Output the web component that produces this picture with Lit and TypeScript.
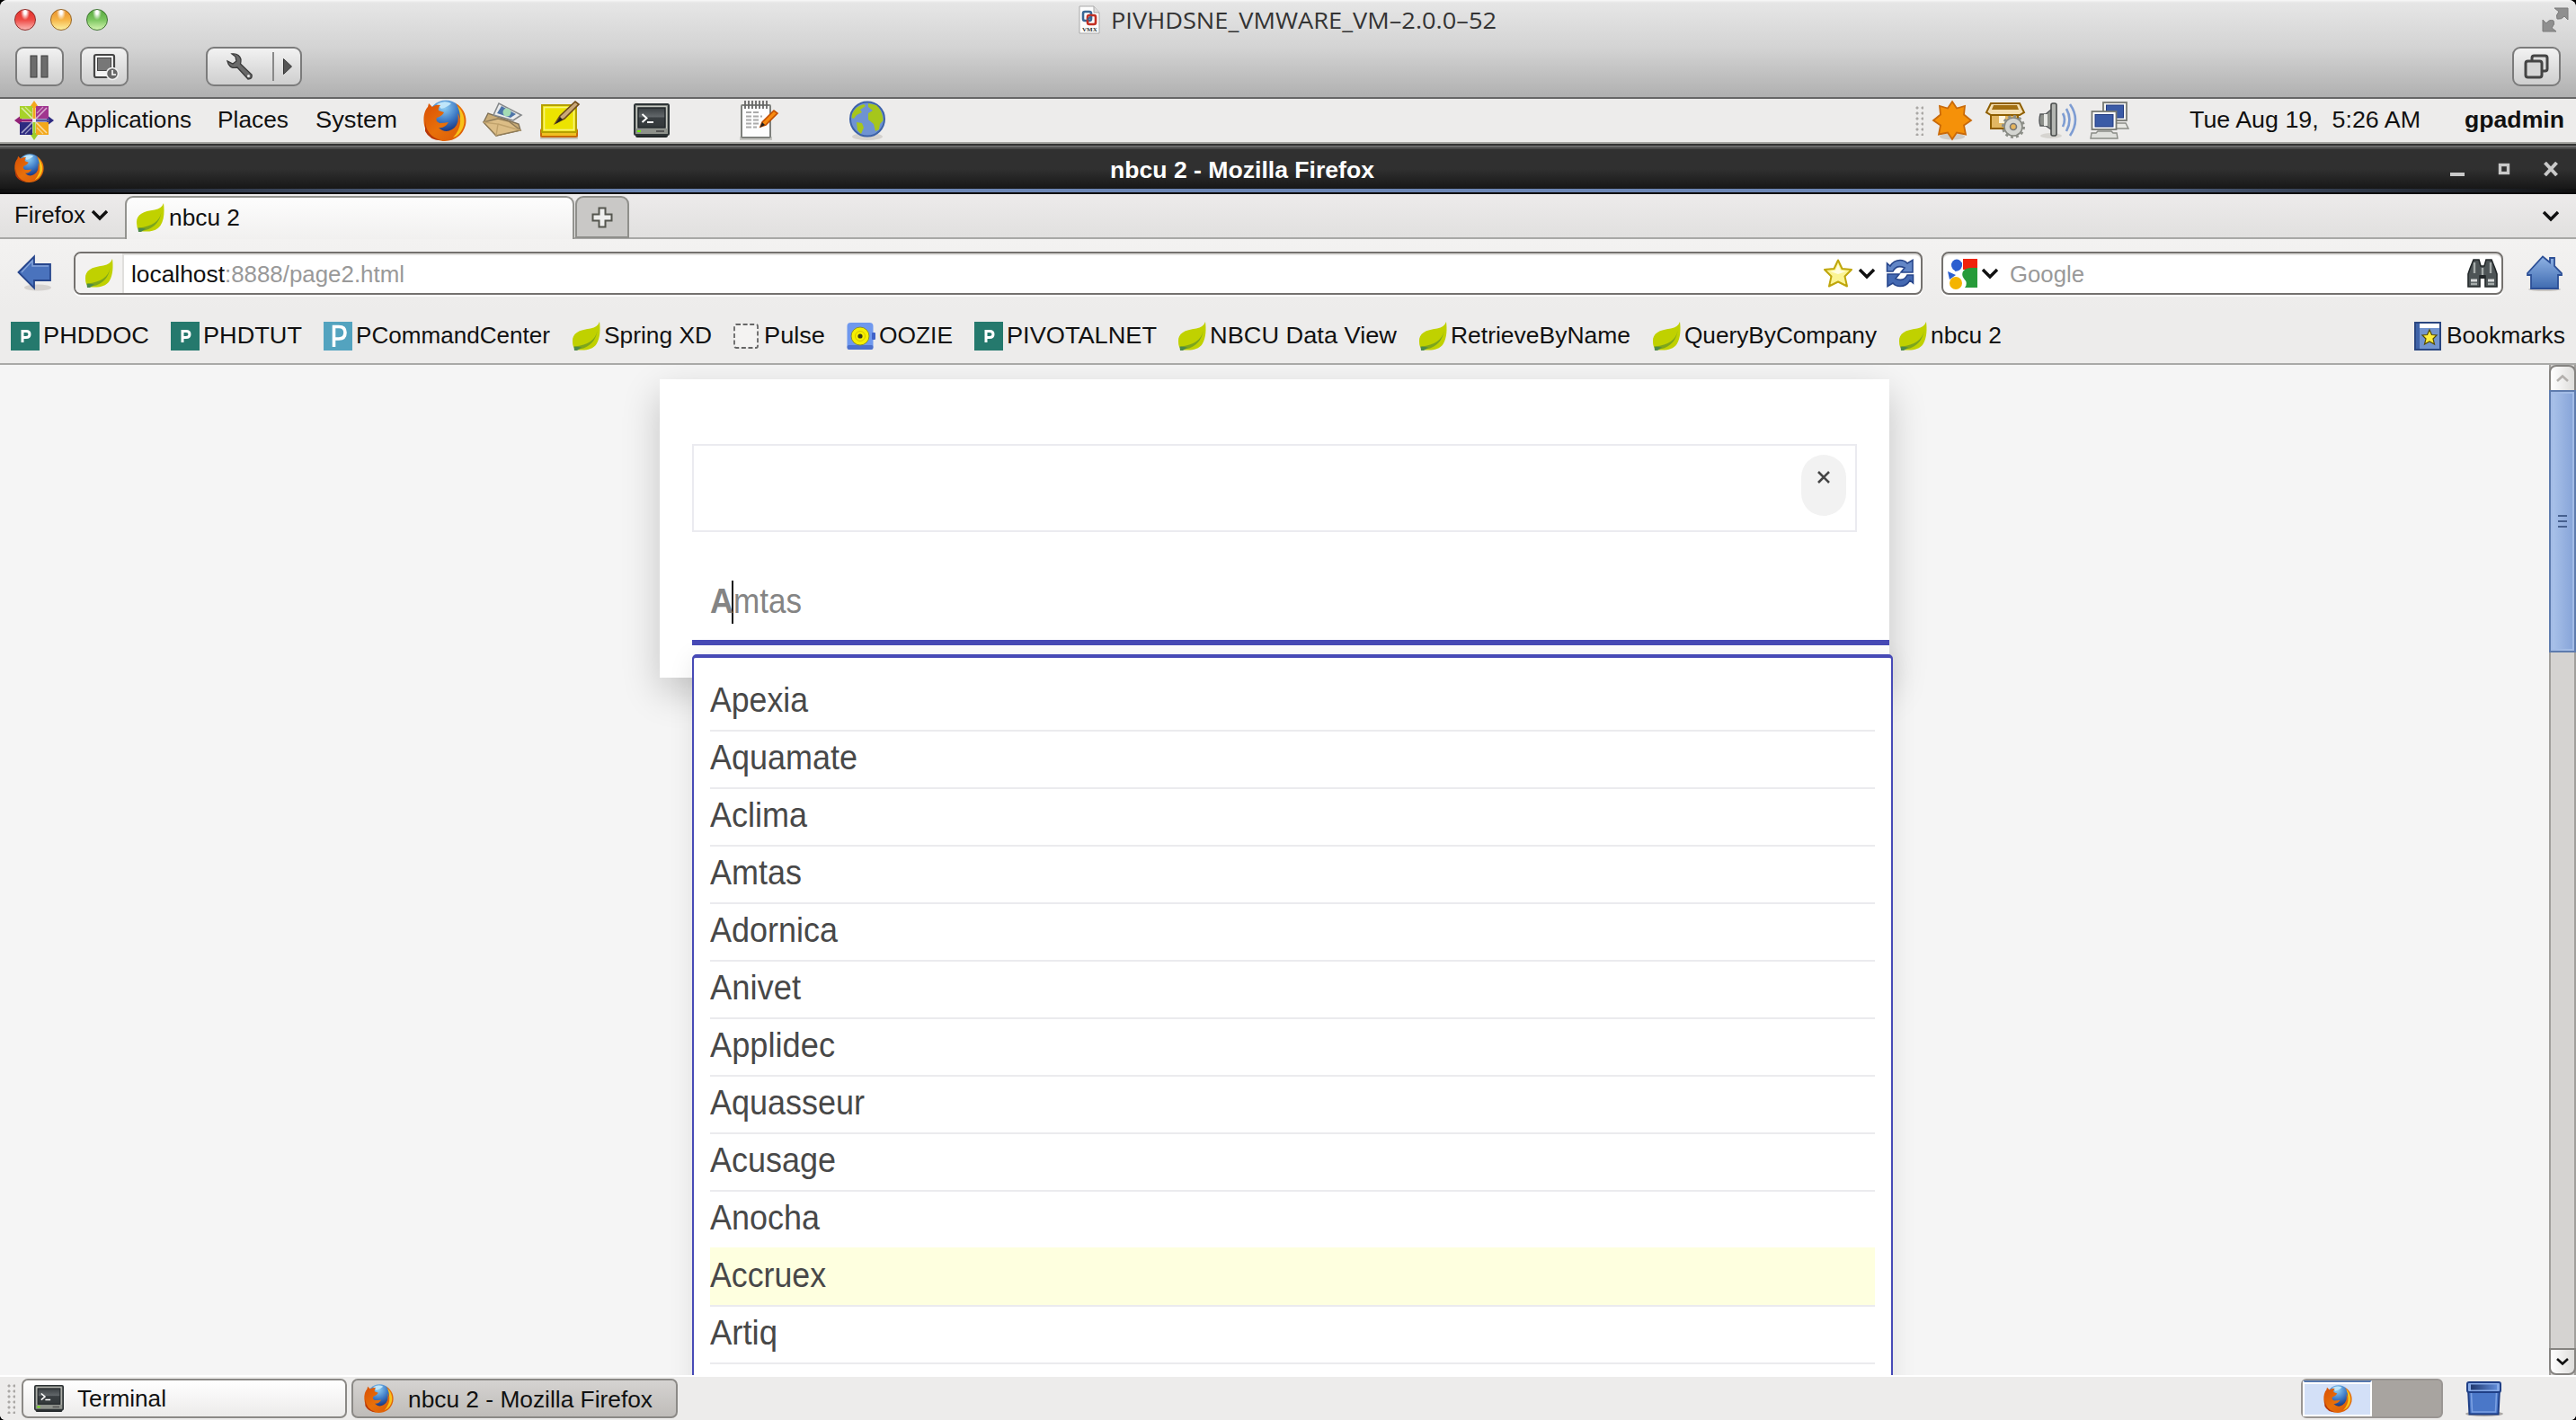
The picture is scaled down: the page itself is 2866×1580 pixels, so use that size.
import { LitElement, html, svg, css } from "lit";

/* A label whose glyphs are condensed or widened so the text spans exactly `w` pixels. */
class FitLabel extends LitElement {
  static properties = { text: {}, w: { type: Number } };
  declare text: string;
  declare w: number;
  static styles = css`
    :host { display: inline-block; white-space: pre; line-height: 30px; }
    .box { display: block; width: var(--w); }
    .run { display: inline-block; transform-origin: 0 50%; }
  `;
  render() {
    return html`<span class="box" style="--w:${this.w}px"><span class="run">${this.text}</span></span>`;
  }
  updated() {
    const s = this.renderRoot.querySelector(".run") as HTMLElement;
    s.style.transform = "none";
    const natural = s.getBoundingClientRect().width;
    if (natural > 0) s.style.transform = `scaleX(${(this.w / natural).toFixed(4)})`;
  }
}
customElements.define("fit-label", FitLabel);

const label = (text: string, w: number, cls = "") =>
  html`<fit-label class=${cls} .text=${text} .w=${w}></fit-label>`;

const icon = (w: number, h: number, vb: string, body: unknown) =>
  html`<svg class="ic" width=${w} height=${h} viewBox=${vb} preserveAspectRatio="none">${body}</svg>`;

const firefox = (w: number, h: number) => icon(w, h, "0 0 48 46", svg`
  <circle cx="25" cy="20" r="19.5" fill="url(#globe)"/>
  <path d="M15 5 Q23 0 31 4 Q27 8 20 10 Z" fill="#bfe6fa"/>
  <path d="M36 4 C45 9 49 19 47 28 C44 40 34 46 24 46 C11 46 1 37 0.5 24 C0 17 2 11 5 8 L6 4 L10 8 Q14 5 19 6 Q16 9 17 12 L23 14 Q21 18 15 20 Q13 24 18 26 Q23 26 28 25 Q24 32 17 31 Q24 38 32 33 Q41 27 38 15 Q42 20 41 27 Q44 15 36 4Z" fill="url(#fox)"/>
  <path d="M38 7 C46 15 48 26 42 35 Q39 40 33 42 Q42 32 41 22 Q41 13 38 7Z" fill="#f9c21a"/>
  <path d="M2 24 Q3 40 19 45 Q7 45 2 35Z" fill="#b83708"/>`);

const leaf = icon(32, 32, "0 0 32 32", svg`
  <path d="M31 0 Q29 6 21 7.500 C8 9 0.500 13 1 22 Q1 28 4 31 C14 32.500 23 31.500 27.500 25 C32 18 32 8 31 0Z" fill="#c0d100"/>
  <path d="M28.500 10 C27 20 18 26 3.500 27.500 L3 31 C18 31 27 22 28.500 10Z" fill="#7da51c"/>
  <path d="M2.500 27.500 L11 28.500 L6 32 L3 32Z" fill="#4d8a4a"/>`);

const pLogo = (bg: string, big: boolean) => icon(32, 32, "0 0 32 32", big ? svg`
  <rect width="32" height="32" fill=${bg}/><path d="M11.500 28 V5.500 H17 Q24 5.500 24 12 Q24 19 17 19 H11.500" fill="none" stroke="#fff" stroke-width="3.600"/>` : svg`
  <rect width="32" height="32" fill=${bg}/><path d="M13 23 V10.500 H17 Q21 10.500 21 14 Q21 17.500 17 17.500 H13" fill="none" stroke="#fff" stroke-width="3"/>`);

const pulse = icon(32, 32, "0 0 32 32", svg`
  <rect x="3" y="3" width="26" height="26" rx="2" fill="#f4f3f2" stroke="#666" stroke-width="1.800" stroke-dasharray="5 2.600"/>`);

const oozie = icon(32, 32, "0 0 32 32", svg`
  <rect x="0.500" y="1" width="29" height="30" rx="4" fill="#6f98ee"/><rect x="28" y="12" width="4" height="8" rx="1" fill="#3f62c8"/>
  <rect x="0.500" y="26" width="29" height="5" rx="2" fill="#4c70cc"/>
  <circle cx="15" cy="16" r="10" fill="#f6f000" stroke="#8a8f30"/><circle cx="15" cy="16" r="2.600" fill="#3a3a18"/><circle cx="15" cy="16" r="5.500" fill="none" stroke="#d8c400"/>`);

const chev = (w = 20, h = 12) => icon(w, h, "0 0 20 12", svg`
  <path d="M2 2 L10 10 L18 2" fill="none" stroke="#111" stroke-width="3.400"/>`);

const terminal = (w: number, h: number) => icon(w, h, "0 0 40 38", svg`
  <rect x="2" y="30" width="36" height="8" rx="2" fill="#232729"/>
  <rect x="1" y="1" width="38" height="34" rx="1.500" fill="#8e918b" stroke="#2e3436" stroke-width="2"/>
  <path d="M3 3 H37 V28 H3Z" fill="#c6c8c2"/>
  <rect x="5" y="5" width="30" height="22" fill="url(#screen)" stroke="#22272a" stroke-width="1.500"/>
  <path d="M9.500 12 L14.500 16.500 L9.500 21" fill="none" stroke="#fff" stroke-width="2"/><path d="M15 21 H22" stroke="#fff" stroke-width="2"/>
  <rect x="4" y="30" width="4" height="2" fill="#73f000"/><rect x="25" y="30" width="9" height="2" fill="#555"/>`);

const centos = icon(44, 44, "0 0 44 44", svg`
  <path d="M22 0 L27.500 8 H16.500Z" fill="#f3a81c"/><path d="M22 44 L27.500 36 H16.500Z" fill="#9ccd2a"/>
  <path d="M0 22 L8 16 V28Z" fill="#932178"/><path d="M44 22 L36 16 V28Z" fill="#2d2a80"/>
  <rect x="6" y="6" width="14" height="14" fill="#a7d129"/><rect x="24" y="6" width="14" height="14" fill="#a0358f"/>
  <rect x="6" y="24" width="14" height="14" fill="#2d2a80"/><rect x="24" y="24" width="14" height="14" fill="#f3a81c"/>
  <path d="M8 8 L20 20 M36 8 L24 20 M8 36 L20 24 M36 36 L24 24" stroke="#fff" stroke-opacity=".6" stroke-width="1.600"/>
  <path d="M12 7 L19 14 M32 7 L25 14 M12 37 L19 30 M32 37 L25 30" stroke="#fff" stroke-opacity=".5" stroke-width="1.200"/>
  <path d="M22 5 V20" stroke="#f3a81c" stroke-width="3"/><path d="M22 24 V39" stroke="#9ccd2a" stroke-width="3"/><path d="M5 22 H20" stroke="#932178" stroke-width="3"/><path d="M24 22 H39" stroke="#5a57a0" stroke-width="3"/>`);

const mail = icon(44, 40, "0 0 44 40", svg`
  <path d="M1 22 L6 12 L40 24 L42 31 L15 37Z" fill="#c9ac77" stroke="#7e6f55" stroke-width="1.400"/>
  <path d="M12 14 L18 1 L43 14 L34 20Z" fill="#eceded" stroke="#85888a" stroke-width="1.600"/>
  <path d="M16 12 L21 4 L37 13 L31 17Z" fill="#4d74a8"/><circle cx="27" cy="11" r="4.500" fill="#a4dcb4"/>
  <path d="M1 22 L17 18 L29 21 L42 31 L15 37Z" fill="#dcbd86" stroke="#907c58" stroke-width="1.400"/>
  <path d="M1 22 L17 24 L15 37 M17 24 L42 31" fill="none" stroke="#c0a26c" stroke-width="1.400"/>`);

const note = icon(44, 44, "0 0 44 44", svg`
  <rect x="0" y="38" width="42" height="5" rx="1" fill="#c9c6bd"/>
  <rect x="1" y="32" width="40" height="8" rx="1" fill="#f0c020" stroke="#c76a0a" stroke-width="2"/>
  <rect x="2" y="5" width="38" height="30" fill="#ece300" stroke="#b5a000" stroke-width="2"/>
  <rect x="4.500" y="7.500" width="33" height="25" fill="none" stroke="#f8f37a" stroke-width="1.600"/>
  <path d="M17 25 L22 17 L39 1 L43 4 L27 20Z" fill="#c9a878" stroke="#6d4a18" stroke-width="1.600"/><path d="M17 26 L22 18 L25 21Z" fill="#222"/>`);

const notepad = icon(44, 44, "0 0 44 44", svg`
  <rect x="1" y="40" width="36" height="4" fill="#c6c6c2"/>
  <rect x="3" y="5" width="32" height="36" rx="1" fill="#fdfdfd" stroke="#7e807c" stroke-width="2"/>
  <path d="M7 0 V9 M11 0 V9 M15 0 V9 M19 0 V9 M23 0 V9 M27 0 V9 M31 0 V9" stroke="#666" stroke-width="1.800"/>
  <path d="M8 13 H22 M8 17.500 H26 M8 21.500 H24 M8 25.500 H22 M8 29.500 H20" stroke="#aaa" stroke-width="1.800" stroke-dasharray="6 2"/>
  <path d="M24 29 L26 24 L39 11 L43 14 L30 27Z" fill="#f78a10" stroke="#c24e00" stroke-width="1.600"/><path d="M23.500 30 L26 24 L29 27Z" fill="#222"/>`);

const world = icon(42, 44, "0 0 42 44", svg`
  <ellipse cx="21" cy="40" rx="17" ry="4" fill="#d5d2ce"/>
  <circle cx="21" cy="20.500" r="19" fill="#6f93d2" stroke="#3d62a8" stroke-width="2"/>
  <path d="M4 15 Q8 6 17 4 L19 6 L13 10 L15 13 L9 16 L6 20 L3.500 19Z M9 24 L15 25 L17 30 L14 37 L10 33Z M22 3 L31 5 Q38 11 38.500 22 L35 26 L34 32 L30 34 L28 26 L22 21 L22 14 L27 11 L22 7Z" fill="#a6c61b"/>`);

const sun = icon(44, 44, "0 0 44 44", svg`
  <ellipse cx="22" cy="40" rx="14" ry="3.500" fill="#cfccc8"/>
  <path d="M22 1 L27 8.500 L36 6 L35 15.500 L43 22 L35 27.500 L37 37.500 L27 35.500 L22 43 L17 35.500 L7 37.500 L9 27.500 L1 22 L9 15.500 L8 6 L17 8.500Z" fill="#f59109" stroke="#c96a0a" stroke-width="1.800"/>`);

const box = icon(44, 42, "0 0 44 42", svg`
  <rect x="6" y="14" width="30" height="16" fill="#e2b763" stroke="#8f5f00" stroke-width="2"/>
  <path d="M6 2 H38 L43 12 L38 15 H6 L1 12Z" fill="#f3dfb4" stroke="#8f5f00" stroke-width="2"/><path d="M9 4 H35 L37 9 H7Z" fill="#a26f12"/>
  <rect x="15" y="16" width="7" height="8" fill="#fff5dc"/>
  <circle cx="31" cy="28" r="10" fill="#d4d5d1" stroke="#84867f" stroke-width="1.600"/>
  <circle cx="31" cy="28" r="11.500" fill="none" stroke="#8d8f89" stroke-width="3" stroke-dasharray="3 3"/><circle cx="31" cy="28" r="3.500" fill="#e5b45c" stroke="#777" stroke-width="1.600"/>`);

const speaker = icon(44, 42, "0 0 44 42", svg`
  <ellipse cx="14" cy="38" rx="12" ry="3" fill="#d6d4d0"/>
  <path d="M2 14 H8 L14 9 V31 L8 27 H2 Q0 21 2 14Z" fill="#8d908b" stroke="#55585a" stroke-width="1.400"/><path d="M6 14 H10 V27 H6Z" fill="#e8e9e6"/>
  <rect x="14" y="2" width="6" height="36" rx="2" fill="#b4b6b2" stroke="#4a4d4c" stroke-width="1.600"/>
  <path d="M27 13 Q31 20 27 28 M31 8 Q38 20 31 33 M35 3 Q47 20 35 38" fill="none" stroke="#7d9cd2" stroke-width="2.600"/>`);

const network = icon(44, 42, "0 0 44 42", svg`
  <path d="M20 24 H40 L43 30 H20Z" fill="#e8e8e4" stroke="#8a8c86" stroke-width="1.400"/>
  <rect x="15" y="1" width="26" height="20" fill="#f4f4f2" stroke="#777973" stroke-width="1.800"/><rect x="18.500" y="4" width="19" height="14" fill="#3b5ba6" stroke="#213a80"/>
  <rect x="2.500" y="11" width="27" height="20" fill="#fff" stroke="#777973" stroke-width="1.800"/><rect x="6" y="14.500" width="20" height="13.500" fill="#3b5ba6" stroke="#213a80"/>
  <path d="M9 33 H24 L26 35 H30 L31 41 H1 L2 35 H7Z" fill="#dfe0dc" stroke="#8a8c86" stroke-width="1.400"/>`);

const back = icon(38, 40, "0 0 38 40", svg`
  <ellipse cx="23" cy="36" rx="15" ry="3.500" fill="#d5d2cf"/>
  <path d="M1.500 19 L19 1.500 V10 H37 V28 H19 V36.500Z" fill="#4a73bd" stroke="#27468c" stroke-width="1.800"/><path d="M5 19 L17 6 V12 H35" fill="none" stroke="#86a5da" stroke-width="1.400"/>`);

const star = icon(32, 32, "0 0 32 32", svg`
  <path d="M16 1.500 L20.500 11 L31 12 L23.500 19.500 L26 30.500 L16 25.500 L6 30.500 L8.500 19.500 L1 12 L11.500 11Z" fill="#fbf494" stroke="#bfa60b" stroke-width="2" stroke-linejoin="round"/><path d="M16 6 L19 13 L25 14 L16 17 L7 14 L13 13Z" fill="#fffde0"/>`);

const reload = icon(32, 32, "0 0 32 32", svg`
  <path d="M1.500 14 V5 L5 8 Q9 1.500 16 1.500 Q21 1.500 24 5 L30 1.500 V15 H17 L21 10 Q12 6 8 14Z" fill="#6286c6" stroke="#27468c" stroke-width="1.600"/>
  <path d="M30.500 18 V27 L27 24 Q23 30.500 16 30.500 Q11 30.500 8 27 L2 30.500 V17 H15 L11 22 Q20 26 24 18Z" fill="#4469b2" stroke="#27468c" stroke-width="1.600"/>`);

const google = icon(34, 32, "0 0 34 32", svg`
  <rect x="18" y="0" width="16" height="12" fill="#f0230c"/><path d="M18 14 Q21 10 27 10 H34 V32 H20 Q24 27 19 22 Q16 18 18 14Z" fill="#279b3a"/>
  <ellipse cx="11" cy="7" rx="6" ry="6.500" fill="#2c5fd0"/><path d="M1 14 L10 18 L3 23Z" fill="#2c5fd0"/><circle cx="10" cy="27" r="7" fill="#f4b400"/><path d="M9 13 Q16 12 16 4" fill="none" stroke="#2c5fd0" stroke-width="2"/>`);

const binoculars = icon(34, 32, "0 0 34 32", svg`
  <path d="M7 1 H13 L15 8 H19 L21 1 H27 L31 11 L33 17 V31 H20 V19 H14 V31 H1 V17 L3 11Z" fill="#4d5456" stroke="#23282a" stroke-width="1.600"/>
  <path d="M14 20 H20" stroke="#23282a" stroke-width="4"/>
  <path d="M4 24 H11 M23 24 H30" stroke="#d8dada" stroke-width="3"/><path d="M8 4 V16 M26 4 V16 M4 28 H11 M23 28 H30 M17 10 V18" stroke="#a5abaa" stroke-width="2.400"/>`);

const home = icon(40, 40, "0 0 40 40", svg`
  <ellipse cx="20" cy="38" rx="18" ry="2" fill="#c9c6c3"/>
  <path d="M26 3 H31 V12 L39 20 V22 H35 V37 H5 V22 H1 V20 L18 1.500 L26 8Z" fill="url(#homeBlue)" stroke="#2c4f96" stroke-width="1.800"/>`);

const bookmark = icon(30, 32, "0 0 30 32", svg`
  <rect x="1" y="1" width="28" height="30" fill="#7294ce" stroke="#2a4680" stroke-width="2"/><rect x="5" y="2" width="23" height="5" fill="#fff"/><rect x="2" y="2" width="4" height="28" fill="#3f63a8"/>
  <path d="M17 9 L19.500 14.500 L25 15 L21 19 L22.500 25 L17 22 L11.500 25 L13 19 L9 15 L14.500 14.500Z" fill="#ffee3c" stroke="#544a00" stroke-width="1.200"/>`);

const trash = icon(44, 40, "0 0 44 40", svg`
  <ellipse cx="22" cy="37" rx="21" ry="3" fill="#aaa7a4"/>
  <path d="M4 9 H39 L37.500 37.500 H5.500Z" fill="#4a77c8" stroke="#1f3f86" stroke-width="2"/><path d="M7.500 14 L8.500 35 H34.500 L35.500 14" fill="none" stroke="#7ba0e2" stroke-width="1.600"/>
  <rect x="3" y="2" width="37" height="11" rx="2" fill="#86a9e6" stroke="#1f3f86" stroke-width="2"/><rect x="7" y="4.500" width="29" height="6" fill="url(#bin)"/>`);

const vmx = icon(24, 32, "0 0 24 32", svg`
  <path d="M1 1 H17 L23 8 V31 H1Z" fill="#fdfdfd" stroke="#a9a9a9"/><path d="M17 1 V8 H23" fill="#ddd" stroke="#a9a9a9"/>
  <rect x="5" y="7" width="9" height="10" rx="2" fill="none" stroke="#3a6794" stroke-width="2.600"/><rect x="10" y="11" width="9" height="10" rx="2" fill="none" stroke="#c32f23" stroke-width="2.600"/><path d="M10 16 L14 12" stroke="#3a6794" stroke-width="2"/>
  <text x="4" y="29" class="vmx">VMX</text>`);

const pause = icon(22, 26, "0 0 22 26", svg`
  <rect x="1" y="1" width="7" height="24" fill="#6c6c6c" stroke="#3c3c3c"/><rect x="13" y="1" width="7" height="24" fill="#6c6c6c" stroke="#3c3c3c"/>`);

const snapshot = icon(30, 32, "0 0 30 32", svg`
  <rect x="3" y="3" width="22" height="25" rx="2" fill="#f2f2f2" stroke="#444" stroke-width="2.200"/><rect x="6.500" y="6.500" width="15" height="14" fill="#777" stroke="#444"/>
  <circle cx="23" cy="24" r="6.500" fill="#666" stroke="#f0f0f0" stroke-width="1.500"/><path d="M23 20 V25 H27" fill="none" stroke="#fff" stroke-width="1.600"/>`);

const wrench = icon(30, 30, "0 0 30 30", svg`
  <path d="M6 1 Q14 0 16 7 Q16 11 15.500 12 L28 24 Q29 29 24 29 L12 16 Q3 18 1 9 L7 12 L11 9 L10 4Z" fill="#6a6a6a" stroke="#3a3a3a" stroke-width="1.300"/><circle cx="24.500" cy="25.500" r="1.500" fill="#eee"/>`);

const play = icon(10, 18, "0 0 10 18", svg`<path d="M0.500 0.500 L9.500 9 L0.500 17.500Z" fill="#555" stroke="#333"/>`);

const windows = icon(30, 30, "0 0 30 30", svg`
  <rect x="10" y="3" width="17" height="17" rx="2.500" fill="#ddd" stroke="#444" stroke-width="3"/><rect x="3" y="9" width="18" height="18" rx="2.500" fill="#d6d6d6" stroke="#444" stroke-width="3"/>`);

const expand = icon(30, 28, "0 0 30 28", svg`
  <path d="M14 1 H29 V14 L25 10 Q22 14 17 13 Q15 9 19 5Z M1 14 L5 18 Q8 13 13 15 Q15 19 11 23 L16 27 H1Z" fill="#8f8f8f" stroke="#7b7b7b"/>`);

const plus = icon(24, 24, "0 0 24 24", svg`
  <path d="M8.500 1.500 H15.500 V8.500 H22.500 V15.500 H15.500 V22.500 H8.500 V15.500 H1.500 V8.500 H8.500Z" fill="#efefee" stroke="#55564f" stroke-width="2"/>`);

const wmin = icon(18, 16, "0 0 18 16", svg`<rect x="1" y="12" width="16" height="4" fill="#c9c9c9"/>`);
const wmax = icon(14, 14, "0 0 14 14", svg`<rect x="2.500" y="2.500" width="9" height="9" fill="none" stroke="#c9c9c9" stroke-width="3.400"/>`);
const wclose = icon(18, 16, "0 0 18 16", svg`<path d="M2.500 1 L15.500 15 M15.500 1 L2.500 15" stroke="#c9c9c9" stroke-width="4"/>`);

const grip = html`<i class="grip"></i>`;

const teal = "#25796d";
const BOOKMARKS: [unknown, string, number, number][] = [
  [pLogo(teal, false), "PHDDOC", 118, 178],
  [pLogo(teal, false), "PHDTUT", 110, 170],
  [pLogo("#53a3bf", true), "PCommandCenter", 216, 276],
  [leaf, "Spring XD", 120, 178],
  [pulse, "Pulse", 68, 128],
  [oozie, "OOZIE", 82, 142],
  [pLogo(teal, false), "PIVOTALNET", 167, 226],
  [leaf, "NBCU Data View", 208, 268],
  [leaf, "RetrieveByName", 200, 260],
  [leaf, "QueryByCompany", 214, 274],
  [leaf, "nbcu 2", 79, 160],
];

const MATCHES: [string, number][] = [
  ["Apexia", 109], ["Aquamate", 164], ["Aclima", 108], ["Amtas", 102],
  ["Adornica", 142], ["Anivet", 101], ["Applidec", 139], ["Aquasseur", 172],
  ["Acusage", 140], ["Anocha", 122], ["Accruex", 129], ["Artiq", 75],
];

class AppRoot extends LitElement {
  static styles = css`
    :host { display: block; width: 2866px; height: 1580px; background: #000; overflow: hidden; }
    * { box-sizing: border-box; }
    .screen { display: flex; flex-direction: column; width: 2866px; height: 1580px; border-radius: 8px 8px 6px 6px; overflow: hidden; background: #edeceb;
      font: 26px/30px "Liberation Sans", Arial, sans-serif; color: #111; }
    .ic { display: block; flex: none; overflow: visible; }
    .defs { position: absolute; }
    .vmx { font: bold 7px/7px "Liberation Serif", serif; fill: #333; }

    .host { flex: none; height: 110px; border-bottom: 2px solid #666; background: linear-gradient(#f8f8f8 0, #e6e6e6 3px, #d3d3d3 50%, #b0b0b0); }
    .hosttitle { display: grid; grid-template-columns: 400px 1fr 400px; height: 44px; align-items: center; }
    .lights { display: flex; gap: 16px; padding-left: 16px; }
    .light { width: 24px; height: 24px; border-radius: 50%; border: 1.5px solid; }
    .red { background: radial-gradient(ellipse at 50% 12%, #fff 0 8%, transparent 32%), linear-gradient(#e0302c, #ee4a44 50%, #fcb8b4); border-color: #8f2b28; }
    .amber { background: radial-gradient(ellipse at 50% 12%, #fff 0 8%, transparent 32%), linear-gradient(#e8912a, #f6b548 50%, #fdf1a0); border-color: #966526; }
    .green { background: radial-gradient(ellipse at 50% 12%, #fff 0 8%, transparent 32%), linear-gradient(#55a83c, #7cc660 50%, #d4f5b0); border-color: #3f7433; }
    .name { display: flex; justify-content: center; align-items: center; gap: 12px; padding-right: 1px; font-family: "Open Sans", "Noto Sans", sans-serif; color: #333; }
    .name fit-label { margin-top: -1px; }
    .fs { justify-self: end; padding-right: 8px; }
    .tools { display: flex; padding: 8px 17px 0; height: 52px; }
    .btn { height: 44px; width: 54px; display: flex; align-items: center; justify-content: center; border: 2px solid #7b7b7b; border-radius: 9px; background: linear-gradient(#f2f2f2, #dcdcdc 60%, #cfcfcf); }
    .b2 { margin-left: 18px; padding-left: 2px; }
    .split { width: 107px; margin-left: 86px; justify-content: flex-start; padding-left: 21px; }
    .split .bar { width: 1.5px; height: 32px; background: #888; margin: 0 10px 0 21px; }
    .b4 { margin-left: auto; }

    .panel { flex: none; height: 50px; display: grid; align-items: center; padding-left: 16px; border-bottom: 2px solid #a6a6a2;
      grid-template-columns: 56px 170px 109px 120px 66px 64px 104px 117px 122px 1186px 20px 59px 59px 57px 111px 306px 1fr; }
    .panel fit-label, .bm fit-label { margin-top: -3px; }
    .bold { font-weight: bold; }
    .grip { display: block; width: 10px; height: 34px; background: radial-gradient(circle, #aaa8a5 0 1.3px, transparent 1.8px) 0 0/6px 6px; }

    .title { flex: none; height: 56px; display: grid; grid-template-columns: 1235px 1fr 400px; align-items: center; color: #fff; font-weight: bold;
      background: linear-gradient(90deg, #111, #6c86b4 25%, #6c86b4 75%, #111) 0 50px/100% 4px no-repeat,
        linear-gradient(#333 0 2px, #6b6b6b 2px 4px, #474747 4px 6px, #303030 6px 28px, #171717 50px, #0c0a0c 54px); }
    .title .fx { padding: 0 0 0 16px; margin-top: -3px; }
    .title fit-label { margin-top: 1px; }
    .wm { display: flex; align-items: center; justify-content: flex-end; gap: 36px; padding-right: 19px; }

    .tabs { flex: none; height: 50px; display: flex; align-items: flex-end; border-bottom: 2px solid #a8a8a6; background: linear-gradient(#edebeb, #e1e0df); }
    .menu { width: 139px; height: 48px; display: flex; align-items: center; gap: 6px; padding: 0 0 2px 16px; }
    .tab { width: 500px; height: 48px; margin-bottom: -2px; display: flex; align-items: center; gap: 5px; padding: 0 0 2px 10px; border: 2px solid #93938f; border-bottom: 0; border-radius: 9px 9px 0 0; background: linear-gradient(#fdfdfd, #f1f0ef); }
    .new { width: 60px; height: 47px; margin: 0 0 -1px 1px; display: flex; align-items: center; justify-content: center; border: 2px solid #8f8f8b; border-radius: 9px 9px 0 0; background: #c9c8c6; }
    .tablist { margin-left: auto; padding: 0 18px 18px 0; }

    .nav { flex: none; height: 78px; display: flex; align-items: flex-start; padding: 14px 15px 0 19px; background: linear-gradient(#f3f2f1, #edeceb); }
    .back { padding-top: 4px; width: 63px; }
    .field { height: 48px; display: flex; align-items: center; border: 2px solid #74716e; border-radius: 8px; background: #fff; box-shadow: inset 0 2px #e2e1df, 0 2px #fff; }
    .field fit-label { margin-top: 1px; }
    .url { width: 2057px; }
    .fav { width: 54px; height: 44px; display: flex; align-items: center; justify-content: center; background: #f3f2f1; border-right: 2px solid #e0dfdd; border-radius: 6px 0 0 6px; margin-right: 8px; }
    .grey { color: #999; }
    .acts { margin-left: auto; display: flex; align-items: center; gap: 6px; padding-right: 7px; }
    .acts .rl { padding-left: 5px; }
    .search { width: 625px; margin-left: 21px; padding: 0 4px; }
    .search .ch { padding: 0 12px 0 4px; }
    .search .bi { margin-left: auto; }
    .home { margin: 4px 0 0 auto; }

    .bms { flex: none; height: 62px; display: flex; align-items: flex-start; padding: 14px 0 0 12px; border-bottom: 2px solid #a9a9a7; }
    .bm { display: flex; align-items: center; height: 32px; gap: 4px; }
    .bmright { margin-left: auto; padding-right: 12px; gap: 6px; }

    .page { flex: 1; min-height: 0; display: flex; background: #f5f5f5; overflow: hidden; }
    .doc { flex: 1; padding: 16px 0 0 734px; overflow: hidden; }
    .card { width: 1368px; height: 332px; background: #fff; padding: 72px 0 0 36px; box-shadow: 0 16px 40px rgba(0,0,0,.2); display: flex; flex-direction: column; }
    .out { flex: none; width: 1296px; height: 98px; border: 2px solid #ebebf0; display: flex; justify-content: flex-end; padding: 10px; }
    .x { width: 50px; height: 68px; border-radius: 25px; background: #f2f2f2; display: flex; justify-content: center; padding-top: 18px; }
    .entry { flex: none; position: relative; height: 126px; width: 1332px; border-bottom: 6px solid #474ab6; display: flex; align-items: flex-start; padding: 54px 0 0 20px; font-size: 39px; color: #848484; }
    .entry fit-label, .row fit-label { line-height: 48px; }
    .entry fit-label { margin-top: -1px; }
    .caret { width: 2px; height: 48px; background: #111; margin-left: -2px; }
    .drop { position: relative; flex: none; width: 1336px; height: 900px; margin-top: 10px; border: 2px solid #474ab6; border-top-width: 4px; border-radius: 5px 5px 0 0; background: #fff; padding: 18px 18px 0; box-shadow: 0 4px 28px rgba(0,0,0,.09); font-size: 39px; color: #484848; }
    .row { height: 64px; border-bottom: 2px solid #ebebee; padding-top: 5px; display: flex; }
    .on { background: #feffdf; margin-top: -2px; height: 66px; padding-top: 7px; position: relative; }

    .scroll { width: 30px; display: flex; flex-direction: column; background: #d5d3d1; border: 2px solid #a19f9c; border-width: 0 2px; }
    .sb { flex: none; width: 30px; height: 30px; margin-left: -2px; display: flex; align-items: center; justify-content: center; border: 2px solid #858380; background: linear-gradient(90deg, #fff, #dedddb); }
    .up { border-radius: 8px 8px 0 0; border-bottom: 0; height: 28px; }
    .down { border-radius: 0 0 8px 8px; margin-top: auto; border-color: #858380; }
    .thumb { flex: none; width: 30px; height: 292px; margin-left: -2px; border: 2px solid #5f7cae; background: linear-gradient(90deg, #abc3ea, #85a3d8); box-shadow: inset 0 0 0 2px #a3bce6; display: flex; flex-direction: column; align-items: center; justify-content: center; gap: 4px; }
    .thumb i { width: 10px; height: 2px; background: #46608f; }

    .task { flex: none; height: 50px; display: flex; align-items: flex-start; padding: 2px 80px 0 7px; border-top: 2px solid #fff; background: #edeceb; }
    .task .grip { margin-top: 5px; }
    .tbtn { height: 44px; display: flex; align-items: center; border: 2px solid #8b8986; border-radius: 7px; }
    .t1 { width: 362px; margin-left: 7px; padding-left: 12px; gap: 15px; background: linear-gradient(#fff, #ecebea); }
    .t2 { width: 363px; margin-left: 5px; padding-left: 12px; gap: 16px; background: linear-gradient(#d5d3d1, #bfbcb9); }
    .t2 fit-label { margin-top: 1px; }
    .ws { margin-left: auto; width: 158px; height: 44px; border-radius: 6px; border: 2px solid #9a9693; background: #a8a4a0; }
    .cell { width: 77px; height: 40px; border: 2px solid #fff; border-top: 2px solid #5577ad; box-shadow: inset 0 2px #fff; background: #d3e0f7; display: flex; justify-content: center; align-items: center; }
    .bin { margin: 2px 0 0 24px; }
  `;

  render() {
    return html`
      <svg class="defs" width="0" height="0"><defs>
        <radialGradient id="globe" cx=".45" cy=".2" r=".8"><stop offset="0" stop-color="#8fd0f4"/><stop offset=".5" stop-color="#3c78c4"/><stop offset="1" stop-color="#0d1f66"/></radialGradient>
        <linearGradient id="fox" x1="0" y1="0" x2="1" y2="1"><stop offset="0" stop-color="#d94f04"/><stop offset=".5" stop-color="#e8700a"/><stop offset="1" stop-color="#d85808"/></linearGradient>
        <linearGradient id="screen" x1="0" y1="0" x2="0" y2="1"><stop offset="0" stop-color="#3a3f42"/><stop offset=".45" stop-color="#62676a"/><stop offset=".5" stop-color="#3a3f42"/><stop offset="1" stop-color="#33383a"/></linearGradient>
        <linearGradient id="homeBlue" x1="0" y1="0" x2="0" y2="1"><stop offset="0" stop-color="#8fb2e4"/><stop offset="1" stop-color="#3f6bb0"/></linearGradient>
        <linearGradient id="bin"><stop offset="0" stop-color="#223a70"/><stop offset="1" stop-color="#5f8ad6"/></linearGradient>
      </defs></svg>
      <div class="screen">
        <header class="host">
          <div class="hosttitle">
            <div class="lights"><i class="light red"></i><i class="light amber"></i><i class="light green"></i></div>
            <div class="name">${vmx}${label("PIVHDSNE_VMWARE_VM–2.0.0–52", 429)}</div>
            <div class="fs">${expand}</div>
          </div>
          <div class="tools">
            <div class="btn">${pause}</div><div class="btn b2">${snapshot}</div>
            <div class="btn split">${wrench}<i class="bar"></i>${play}</div>
            <div class="btn b4">${windows}</div>
          </div>
        </header>
        <nav class="panel">
          ${centos}${label("Applications", 141)}${label("Places", 79)}${label("System", 91)}
          ${firefox(48, 46)}${mail}${note}${terminal(40, 38)}${notepad}${world}
          ${grip}${sun}${box}${speaker}${network}
          ${label("Tue Aug 19,  5:26 AM", 257)}${label("gpadmin", 111, "bold")}
        </nav>
        <div class="title">
          <div class="fx">${firefox(33, 32)}</div>
          ${label("nbcu 2 - Mozilla Firefox", 294)}
          <div class="wm">${wmin}${wmax}${wclose}</div>
        </div>
        <div class="tabs">
          <div class="menu">${label("Firefox", 79)}${chev()}</div>
          <div class="tab">${leaf}${label("nbcu 2", 79)}</div>
          <div class="new">${plus}</div>
          <div class="tablist">${chev()}</div>
        </div>
        <div class="nav">
          <div class="back">${back}</div>
          <div class="field url">
            <div class="fav">${leaf}</div>
            ${label("localhost", 104)}${label(":8888/page2.html", 200, "grey")}
            <div class="acts">${star}${chev()}<div class="rl">${reload}</div></div>
          </div>
          <div class="field search">${google}<div class="ch">${chev()}</div>${label("Google", 83, "grey")}<div class="bi">${binoculars}</div></div>
          <div class="home">${home}</div>
        </div>
        <div class="bms">
          ${BOOKMARKS.map(([ic, t, w, slot]) => html`<div class="bm" style="width:${slot}px">${ic}${label(t, w)}</div>`)}
          <div class="bm bmright">${bookmark}${label("Bookmarks", 132)}</div>
        </div>
        <main class="page">
          <div class="doc">
            <section class="card">
              <div class="out"><div class="x">${icon(14, 14, "0 0 14 14", svg`<path d="M1 1 L13 13 M13 1 L1 13" stroke="#444" stroke-width="2.600"/>`)}</div></div>
              <div class="entry">${label("A", 26, "bold")}<i class="caret"></i>${label("mtas", 76)}</div>
              <div class="drop">
                ${MATCHES.map(([t, w]) => html`<div class="row ${t === "Accruex" ? "on" : ""}">${label(t, w)}</div>`)}
              </div>
            </section>
          </div>
          <div class="scroll">
            <div class="sb up">${icon(14, 8, "0 0 14 8", svg`<path d="M1 7 L7 1.500 L13 7" fill="none" stroke="#b3b0ad" stroke-width="2.600"/>`)}</div>
            <div class="thumb"><i></i><i></i><i></i></div>
            <div class="sb down">${icon(14, 8, "0 0 14 8", svg`<path d="M1 1 L7 6.500 L13 1" fill="none" stroke="#111" stroke-width="2.600"/>`)}</div>
          </div>
        </main>
        <footer class="task">
          ${grip}
          <div class="tbtn t1">${terminal(33, 30)}${label("Terminal", 99)}</div>
          <div class="tbtn t2">${firefox(33, 32)}${label("nbcu 2 - Mozilla Firefox", 272)}</div>
          <div class="ws"><div class="cell">${firefox(32, 31)}</div></div>
          <div class="bin">${trash}</div>
        </footer>
      </div>`;
  }
}
customElements.define("app-root", AppRoot);
